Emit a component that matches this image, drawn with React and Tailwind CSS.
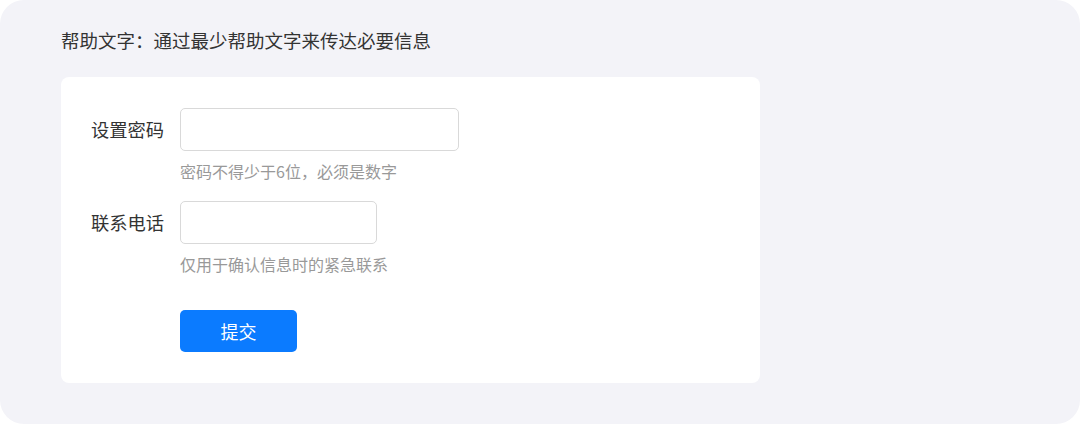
export default function App() {
  return (
    <div className="w-[1080px] h-[424px] bg-white" style={{ fontFamily: '"Noto Sans CJK SC", "Noto Sans", sans-serif' }}>
      <div className="h-full rounded-[24px] bg-[#f3f3f8] pl-[61px] pt-[27px]">
        <p className="text-[18.5px] leading-[26px] text-[#333]">帮助文字：通过最少帮助文字来传达必要信息</p>

        <div className="mt-[24px] w-[699px] rounded-[8px] bg-white px-[30px] pt-[31px] pb-[31px]">
          <div className="flex">
            <label className="w-[73px] mr-4 h-[43px] flex items-center whitespace-nowrap text-[18.3px] text-[#333]">设置密码</label>
            <div>
              <input type="password" className="block w-[279px] h-[43px] rounded-[5px] border border-[#d9d9d9] bg-white px-3 outline-none" />
              <p className="mt-2 text-[16px] leading-[24px] text-[#999]">密码不得少于6位，必须是数字</p>
            </div>
          </div>

          <div className="flex mt-[18px]">
            <label className="w-[73px] mr-4 h-[43px] flex items-center whitespace-nowrap text-[18.3px] text-[#333]">联系电话</label>
            <div>
              <input type="text" className="block w-[197px] h-[43px] rounded-[5px] border border-[#d9d9d9] bg-white px-3 outline-none" />
              <p className="mt-2 text-[16px] leading-[24px] text-[#999]">仅用于确认信息时的紧急联系</p>
            </div>
          </div>

          <div className="flex mt-[34px]">
            <div className="w-[73px] mr-4" />
            <button className="w-[117px] h-[42px] rounded-[5px] bg-[#0b7bff] text-[18px] text-white">提交</button>
          </div>
        </div>
      </div>
    </div>
  );
}
